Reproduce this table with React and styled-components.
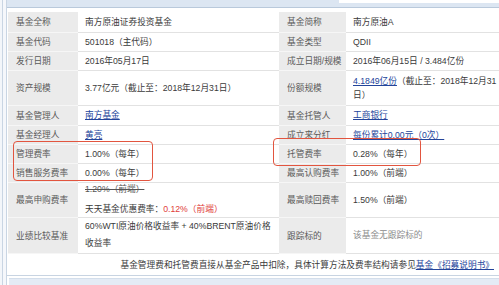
import React from "react";
import styled, { createGlobalStyle } from "styled-components";

const GlobalStyle = createGlobalStyle`
    html, body {
        margin: 0;
        padding: 0;
        background: #ffffff;
        overflow: hidden;
    }

    body {
        font-family: "Liberation Sans", "Noto Sans CJK SC", sans-serif;
    }
`;

const Page = styled.div`
    width: 499px;
    height: 285px;
    overflow: hidden;
    display: flex;
    box-sizing: border-box;
    padding-left: 2px;
    background: #f3f6fa;
`;

const Rail = styled.div`
    flex: 1;
    min-width: 0;
    display: flex;
    border-left: 1px solid #c9d5e3;
    padding-left: 3px;
    background: #f5f7fb;
`;

const Panel = styled.div`
    flex: 1;
    min-width: 0;
    display: flex;
    flex-direction: column;
    border-left: 1px solid #c9d5e3;
    background: #ffffff;
`;

const Header = styled.div`
    display: flex;
    flex-shrink: 0;
    height: 7px;
    border-bottom: 1px solid #b9c9db;
`;

const Tab = styled.div`
    width: 332px;
    background: #dce6f2;
`;

const TabRest = styled.div`
    flex: 1;
    margin-top: 3px;
    background: #dce6f2;
`;

const TableWrap = styled.div`
    position: relative;
    flex-shrink: 0;
    margin: 4px 0 0 1px;
`;

const Table = styled.table`
    border-collapse: collapse;
    border-spacing: 0;
    table-layout: fixed;
    width: 498px;
    font-size: 8.7px;
    color: #3a3a3a;
`;

const Row = styled.tr`
    height: ${(p) => p.$h}px;
`;

const Label = styled.td`
    padding: 0 0 0 8px;
    background: #ebebeb;
    color: #5a5a5a;
    border-bottom: 1px solid #f6f6f6;
    white-space: nowrap;
    vertical-align: middle;
`;

const Value = styled.td`
    padding: 0 0 0 7px;
    border-bottom: 1px solid #e2e2e2;
    white-space: nowrap;
    vertical-align: middle;
    line-height: ${(p) => p.$lh || "12px"};
    color: ${(p) => (p.$muted ? "#8c8c8c" : "#3a3a3a")};
`;

const Link = styled.a`
    color: #23449a;
    text-decoration: underline;
`;

const Struck = styled.div`
    line-height: 13px;
    color: #555555;
    text-decoration: line-through;
`;

const Promo = styled.div`
    line-height: 13px;
    margin-top: 7px;
`;

const Red = styled.span`
    color: #e0403a;
`;

const Note = styled.td`
    padding: 0 12px 0 0;
    text-align: right;
    white-space: nowrap;
    vertical-align: middle;
    color: #3a3a3a;
`;

const Mark = styled.div`
    position: absolute;
    left: ${(p) => p.$x}px;
    top: ${(p) => p.$y}px;
    width: ${(p) => p.$w}px;
    height: ${(p) => p.$h}px;
    border: 1.5px solid #e2553f;
    border-radius: 4px;
    box-sizing: border-box;
    pointer-events: none;
`;

const Footer = styled.div`
    flex: 1;
    border-top: 1px solid #c8d4e2;
    padding: 2px 0 0 2px;
    display: flex;
`;

const FooterBar = styled.div`
    flex: 1;
    background: #e4ebf5;
    border-top: 1px solid #d3deeb;
`;

const App = () => {
    return (
        <React.Fragment>
            <GlobalStyle />
            <Page>
                <Rail>
                    <Panel>
                        <Header>
                            <Tab />
                            <TabRest />
                        </Header>

                        <TableWrap>
                            <Table>
                                <colgroup>
                                    <col style={{ width: 70 }} />
                                    <col style={{ width: 201 }} />
                                    <col style={{ width: 67 }} />
                                    <col style={{ width: 160 }} />
                                </colgroup>
                                <tbody>
                                    <Row $h={20}>
                                        <Label>基金全称</Label>
                                        <Value>南方原油证券投资基金</Value>
                                        <Label>基金简称</Label>
                                        <Value>南方原油A</Value>
                                    </Row>
                                    <Row $h={19}>
                                        <Label>基金代码</Label>
                                        <Value>501018（主代码）</Value>
                                        <Label>基金类型</Label>
                                        <Value>QDII</Value>
                                    </Row>
                                    <Row $h={19}>
                                        <Label>发行日期</Label>
                                        <Value>2016年05月17日</Value>
                                        <Label>成立日期/规模</Label>
                                        <Value>2016年06月15日 / 3.484亿份</Value>
                                    </Row>
                                    <Row $h={35}>
                                        <Label>资产规模</Label>
                                        <Value>3.77亿元（截止至：2018年12月31日）</Value>
                                        <Label>份额规模</Label>
                                        <Value $lh="14px">
                                            <Link>4.1849亿份</Link>（截止至：2018年12月31
                                            <br />
                                            日）
                                        </Value>
                                    </Row>
                                    <Row $h={20}>
                                        <Label>基金管理人</Label>
                                        <Value>
                                            <Link>南方基金</Link>
                                        </Value>
                                        <Label>基金托管人</Label>
                                        <Value>
                                            <Link>工商银行</Link>
                                        </Value>
                                    </Row>
                                    <Row $h={19}>
                                        <Label>基金经理人</Label>
                                        <Value>
                                            <Link>黄亮</Link>
                                        </Value>
                                        <Label>成立来分红</Label>
                                        <Value>
                                            <Link>每份累计0.00元（0次）</Link>
                                        </Value>
                                    </Row>
                                    <Row $h={19}>
                                        <Label>管理费率</Label>
                                        <Value>1.00%（每年）</Value>
                                        <Label>托管费率</Label>
                                        <Value>0.28%（每年）</Value>
                                    </Row>
                                    <Row $h={19}>
                                        <Label>销售服务费率</Label>
                                        <Value>0.00%（每年）</Value>
                                        <Label>最高认购费率</Label>
                                        <Value>1.00%（前端）</Value>
                                    </Row>
                                    <Row $h={35}>
                                        <Label>最高申购费率</Label>
                                        <Value>
                                            <Struck>1.20%（前端）</Struck>
                                            <Promo>
                                                天天基金优惠费率：<Red>0.12%（前端）</Red>
                                            </Promo>
                                        </Value>
                                        <Label>最高赎回费率</Label>
                                        <Value>1.50%（前端）</Value>
                                    </Row>
                                    <Row $h={36}>
                                        <Label>业绩比较基准</Label>
                                        <Value $lh="17px">
                                            60%WTI原油价格收益率 + 40%BRENT原油价格
                                            <br />
                                            收益率
                                        </Value>
                                        <Label>跟踪标的</Label>
                                        <Value $muted>该基金无跟踪标的</Value>
                                    </Row>
                                    <Row $h={22}>
                                        <Note colSpan={4}>
                                            基金管理费和托管费直接从基金产品中扣除，具体计算方法及费率结构请参见
                                            <Link>基金《招募说明书》</Link>
                                        </Note>
                                    </Row>
                                </tbody>
                            </Table>

                            <Mark $x={5} $y={129} $w={140} $h={40} />
                            <Mark $x={265} $y={126} $w={148} $h={28} />
                        </TableWrap>

                        <Footer>
                            <FooterBar />
                        </Footer>
                    </Panel>
                </Rail>
            </Page>
        </React.Fragment>
    );
};

export default App;
